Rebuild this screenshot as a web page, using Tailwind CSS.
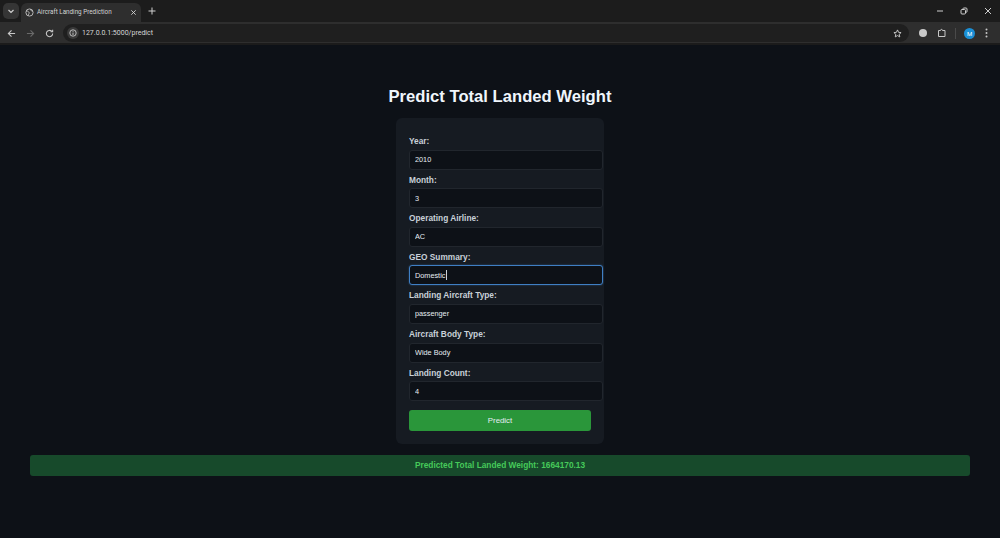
<!DOCTYPE html>
<html lang="en">
<head>
    <meta charset="UTF-8" />
    <meta name="viewport" content="width=device-width, initial-scale=1.0"/>
    <title>Aircraft Landing Prediction</title>
    <script src="https://cdn.jsdelivr.net/npm/@tailwindcss/browser@4"></script>
</head>
<body class="h-[538px] w-[1000px] overflow-hidden bg-[#0d1117] font-['Liberation_Sans',Arial,sans-serif] text-[#c9d1d9]">
    <!-- browser chrome -->
    <header class="h-[45px] bg-[#2e2e2e] border-b-2 border-[#1b1b1b] font-['Roboto',sans-serif]">
        <div class="h-[22px] bg-[#1c1c1c] flex items-center pl-[3px]">
            <div class="w-[16px] h-[16px] rounded-[5px] bg-[#353535] flex items-center justify-center">
                <svg width="8" height="8" viewBox="0 0 8 8" fill="none" stroke="#d0d0d0" stroke-width="1.2"><path d="M1.5 3 L4 5.5 L6.5 3"/></svg>
            </div>
            <div class="ml-[2px] w-[120px] h-[19px] mt-[3px] bg-[#2e2e2e] rounded-t-[6px] flex items-center pl-[4px] pr-[4px]">
                <svg width="9" height="9" viewBox="0 0 10 10" fill="none" stroke="#c4c4c4" stroke-width="1"><circle cx="5" cy="5" r="4"/><path d="M1.5 3.5 C3 3 4 4 4.5 5 C5 6.5 3.5 7 3.5 8.5 M6 1.5 C6 3 7.5 3 8.5 3.5"/></svg>
                <span class="ml-[3px] text-[6.3px] leading-none text-[#d4d4d4] whitespace-nowrap">Aircraft Landing Prediction</span>
                <svg class="ml-auto" width="7" height="7" viewBox="0 0 8 8" stroke="#d8d8d8" stroke-width="1"><path d="M1.5 1.5 L6.5 6.5 M6.5 1.5 L1.5 6.5"/></svg>
            </div>
            <svg class="ml-[7px]" width="8" height="8" viewBox="0 0 8 8" stroke="#d0d0d0" stroke-width="1"><path d="M4 .5 V7.5 M.5 4 H7.5"/></svg>
            <div class="ml-auto flex items-center">
                <svg class="mr-[16px]" width="8" height="8" viewBox="0 0 8 8" stroke="#cfcfcf" stroke-width="1"><path d="M1 4 H7"/></svg>
                <svg class="mr-[16px]" width="8" height="8" viewBox="0 0 8 8" fill="none" stroke="#cfcfcf" stroke-width="1"><rect x="1" y="2.5" width="4.5" height="4.5" rx="1"/><path d="M3 2 C3 1 3.5 1 4 1 H6 C6.8 1 7 1.5 7 2 V4.500 C7 5 6.800 5.300 6 5.300"/></svg>
                <svg class="mr-[8px]" width="8" height="8" viewBox="0 0 8 8" stroke="#cfcfcf" stroke-width="1"><path d="M1 1 L7 7 M7 1 L1 7"/></svg>
            </div>
        </div>
        <div class="h-[21px] flex items-center pl-[7px] pt-[1px]">
            <svg width="9" height="9" viewBox="0 0 10 10" fill="none" stroke="#c7c7c7" stroke-width="1.2"><path d="M9 5 H1.500 M5 1.500 L1.500 5 L5 8.500"/></svg>
            <svg class="ml-[10px]" width="9" height="9" viewBox="0 0 10 10" fill="none" stroke="#6a6a6a" stroke-width="1.2"><path d="M1 5 H8.500 M5 1.500 L8.500 5 L5 8.500"/></svg>
            <svg class="ml-[10px]" width="9" height="9" viewBox="0 0 10 10" fill="none" stroke="#c7c7c7" stroke-width="1.200"><path d="M8.500 5 A3.500 3.500 0 1 1 7.400 2.500 M8.500 .8 V3 H6.300"/></svg>
            <div class="ml-[9px] w-[846px] h-[18px] rounded-full bg-[#1f1f1f] flex items-center pl-[4px] pr-[7px]">
                <div class="w-[12px] h-[12px] rounded-full bg-[#3a3a3a] flex items-center justify-center">
                    <svg width="8" height="8" viewBox="0 0 10 10" fill="none" stroke="#dadada" stroke-width="1"><circle cx="5" cy="5" r="4"/><path d="M5 4.500 V7.500 M5 2.500 V3.500"/></svg>
                </div>
                <span class="ml-[3px] text-[7px] leading-none text-[#d6d6d6]">127.0.0.1:5000/predict</span>
                <svg class="ml-auto" width="9" height="9" viewBox="0 0 10 10" fill="none" stroke="#d0d0d0" stroke-width="1"><path d="M5 1 L6.200 3.700 L9 4 L6.900 5.900 L7.500 8.800 L5 7.300 L2.500 8.800 L3.100 5.900 L1 4 L3.800 3.700 Z"/></svg>
            </div>
            <div class="ml-[10px] w-[8px] h-[8px] rounded-full bg-[#c9c9c9]"></div>
            <svg class="ml-[10px]" width="10" height="10" viewBox="0 0 10 10" fill="none" stroke="#c7c7c7" stroke-width="1"><path d="M1.500 2.500 H3.500 C3.500 1 5.500 1 5.500 2.500 H8 V8.500 H1.500 Z"/></svg>
            <div class="ml-[8px] w-px h-[11px] bg-[#4a4a4a]"></div>
            <div class="ml-[8px] w-[11px] h-[11px] rounded-full bg-[#1a8fd6] text-white text-[6px] leading-[11px] text-center">M</div>
            <svg class="ml-[10px]" width="3" height="10" viewBox="0 0 3 10" fill="#c7c7c7"><circle cx="1.500" cy="1.500" r="1"/><circle cx="1.500" cy="5" r="1"/><circle cx="1.500" cy="8.500" r="1"/></svg>
        </div>
    </header>

    <main class="flex flex-col items-center pt-[42px]">
        <h1 class="text-[16.64px] leading-[20px] font-bold text-[#f0f6fc]">Predict Total Landed Weight</h1>
        <form class="mt-[11px] w-[208px] h-[326px] bg-[#161b22] rounded-[6px] pt-[17px] pl-[13px] flex flex-col text-[8.32px]">
            <label class="block h-[14.6px] leading-[12px] font-bold">Year:</label>
            <input type="text" value="2010" class="block w-[194px] h-[20px] mb-[4px] px-[5px] bg-[#0d1117] border border-[#21262d] rounded-[3px] text-[7.3px] text-[#e6edf3] outline-none" />
            <label class="block h-[14.6px] leading-[12px] font-bold">Month:</label>
            <input type="text" value="3" class="block w-[194px] h-[20px] mb-[4px] px-[5px] bg-[#0d1117] border border-[#21262d] rounded-[3px] text-[7.3px] text-[#e6edf3] outline-none" />
            <label class="block h-[14.6px] leading-[12px] font-bold">Operating Airline:</label>
            <input type="text" value="AC" class="block w-[194px] h-[20px] mb-[4px] px-[5px] bg-[#0d1117] border border-[#21262d] rounded-[3px] text-[7.3px] text-[#e6edf3] outline-none" />
            <label class="block h-[14.6px] leading-[12px] font-bold">GEO Summary:</label>
            <div class="relative w-[194px] h-[20px] mb-[4px]">
                <input type="text" value="Domestic" class="block w-full h-full px-[5px] bg-[#0d1117] border border-[#3f7fc4] rounded-[3px] shadow-[0_0_2px_#58a6ff66] text-[7.3px] text-[#e6edf3] outline-none" />
                <span class="absolute left-[37px] top-[5px] w-px h-[10px] bg-[#c9d1d9]"></span>
            </div>
            <label class="block h-[14.6px] leading-[12px] font-bold">Landing Aircraft Type:</label>
            <input type="text" value="passenger" class="block w-[194px] h-[20px] mb-[4px] px-[5px] bg-[#0d1117] border border-[#21262d] rounded-[3px] text-[7.3px] text-[#e6edf3] outline-none" />
            <label class="block h-[14.6px] leading-[12px] font-bold">Aircraft Body Type:</label>
            <input type="text" value="Wide Body" class="block w-[194px] h-[20px] mb-[4px] px-[5px] bg-[#0d1117] border border-[#21262d] rounded-[3px] text-[7.3px] text-[#e6edf3] outline-none" />
            <label class="block h-[14.6px] leading-[12px] font-bold">Landing Count:</label>
            <input type="text" value="4" class="block w-[194px] h-[20px] px-[5px] bg-[#0d1117] border border-[#21262d] rounded-[3px] text-[7.3px] text-[#e6edf3] outline-none" />
            <button type="button" class="mt-[9px] w-[182px] h-[21px] bg-[#2a963a] rounded-[3px] text-[7.8px] text-[#e6edf3]">Predict</button>
        </form>
        <div class="mt-[11px] w-[940px] h-[21px] bg-[#174a2b] rounded-[3px] text-center text-[8.32px] leading-[21px] font-bold text-[#46c95a]">Predicted Total Landed Weight: 1664170.13</div>
    </main>
</body>
</html>
